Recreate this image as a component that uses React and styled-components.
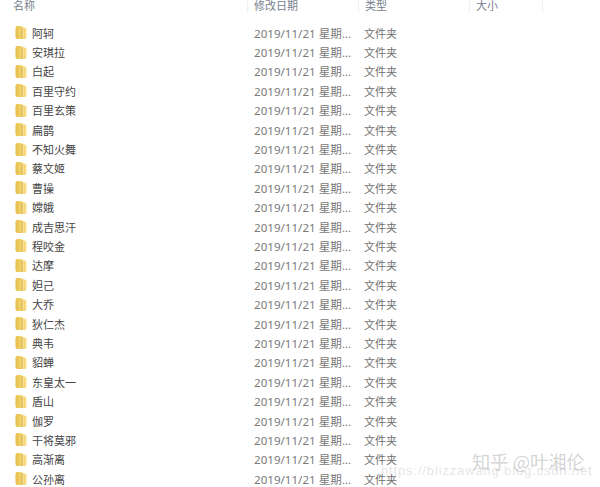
import styled, { createGlobalStyle } from 'styled-components'

const GlobalStyle = createGlobalStyle`
    html, body {
        margin: 0;
        padding: 0;
        background: #ffffff;
        overflow: hidden;
    }
`

const columns = '247px 111px 111px 73px 58px'

const Explorer = styled.main`
    position: relative;
    width: 600px;
    height: 487px;
    overflow: hidden;
    background: #ffffff;
    font-family: "Noto Sans CJK SC", "Liberation Sans", sans-serif;
`

const Header = styled.header`
    display: grid;
    grid-template-columns: ${columns};
    height: 13px;
    margin-bottom: 10px;
`

const HeaderCell = styled.div`
    height: 13px;
    padding-left: ${props => props.$first ? '13px' : '6px'};
    border-left: ${props => props.$first ? 'none' : '1px solid #eef0f3'};
    color: #75818e;
    font-family: "Liberation Sans", "Noto Sans CJK SC", sans-serif;
    font-size: 11px;
    line-height: 13px;
`

const Row = styled.div`
    display: grid;
    grid-template-columns: ${columns};
    align-items: center;
    height: 19.4px;
    font-size: 11px;
`

const NameCell = styled.div`
    display: flex;
    align-items: center;
    gap: 5px;
    padding-left: 15px;
    color: #444444;
`

const DateCell = styled.div`
    padding-left: 7px;
    color: #7a7a7a;
    font-family: "Noto Sans", "Noto Sans CJK SC", sans-serif;
    font-size: 11.6px;
    white-space: nowrap;
`

const TypeCell = styled.div`
    padding-left: 6px;
    color: #707070;
`

const ZhihuMark = styled.div`
    position: absolute;
    left: 472px;
    top: 450px;
    color: rgba(160, 160, 160, 0.45);
    font-size: 18.3px;
    line-height: 22px;
    white-space: nowrap;
`

const UrlMark = styled.div`
    position: absolute;
    left: 381px;
    top: 463px;
    color: rgba(175, 175, 175, 0.34);
    font-family: "Liberation Sans", sans-serif;
    font-size: 13px;
    letter-spacing: 0.85px;
    line-height: 16px;
    white-space: nowrap;
`

const FolderIcon = () => (
    <svg width="12" height="15" viewBox="0 0 12 15" aria-hidden="true">
        <defs>
            <linearGradient id="folderBack" x1="0" y1="0" x2="1" y2="0">
                <stop offset="0" stopColor="#e4bb48" />
                <stop offset="0.55" stopColor="#f4d873" />
                <stop offset="1" stopColor="#f9e9a8" />
            </linearGradient>
            <linearGradient id="folderFront" x1="0" y1="0" x2="1" y2="0">
                <stop offset="0" stopColor="#fdf0bd" />
                <stop offset="1" stopColor="#f2cb5c" />
            </linearGradient>
        </defs>
        <path d="M0.5 3 Q0.5 1 2.5 1 L6 1 Q7 1 7.5 2 L10 2.5 Q11.8 2.7 11.8 4.5 L11.8 12 Q11.8 14 9.8 14 L2.5 14 Q0.5 14 0.5 12 Z" fill="url(#folderBack)" />
        <path d="M7 2.4 L10 4 L10 14 L7 14 Z" fill="url(#folderFront)" />
        <path d="M7 2.4 L7 14" stroke="#c99a26" strokeWidth="0.8" />
    </svg>
)

const heroes = [
    '阿轲', '安琪拉', '白起', '百里守约', '百里玄策', '扁鹊', '不知火舞', '蔡文姬',
    '曹操', '嫦娥', '成吉思汗', '程咬金', '达摩', '妲己', '大乔', '狄仁杰',
    '典韦', '貂蝉', '东皇太一', '盾山', '伽罗', '干将莫邪', '高渐离', '公孙离',
]

export default function App() {
    return (
        <Explorer>
            <GlobalStyle />
            <Header>
                <HeaderCell $first>名称</HeaderCell>
                <HeaderCell>修改日期</HeaderCell>
                <HeaderCell>类型</HeaderCell>
                <HeaderCell>大小</HeaderCell>
                <HeaderCell />
            </Header>
            {heroes.map(name => (
                <Row key={name}>
                    <NameCell>
                        <FolderIcon />
                        {name}
                    </NameCell>
                    <DateCell>2019/11/21 星期...</DateCell>
                    <TypeCell>文件夹</TypeCell>
                </Row>
            ))}
            <UrlMark>https://blizzawang.blog.csdn.net</UrlMark>
            <ZhihuMark>知乎 @叶湘伦</ZhihuMark>
        </Explorer>
    )
}
